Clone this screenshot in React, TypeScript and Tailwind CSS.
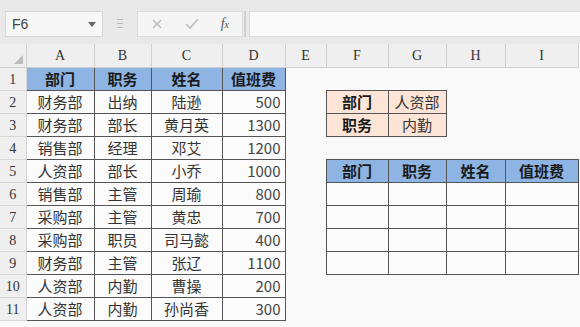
import React from 'react';

type Kind = 'blue' | 'peach' | 'data' | 'none';
type Cell = { t?: string; k?: Kind; b?: boolean; num?: boolean };

const widths = [26, 68, 57, 71, 63, 41, 62, 58, 59, 73];
const letters = ['A', 'B', 'C', 'D', 'E', 'F', 'G', 'H', 'I'];

const staff: [string, string, string, string][] = [
  ['财务部', '出纳', '陆逊', '500'],
  ['财务部', '部长', '黄月英', '1300'],
  ['销售部', '经理', '邓艾', '1200'],
  ['人资部', '部长', '小乔', '1000'],
  ['销售部', '主管', '周瑜', '800'],
  ['采购部', '主管', '黄忠', '700'],
  ['采购部', '职员', '司马懿', '400'],
  ['财务部', '主管', '张辽', '1100'],
  ['人资部', '内勤', '曹操', '200'],
  ['人资部', '内勤', '孙尚香', '300'],
];

const heads = ['部门', '职务', '姓名', '值班费'];

// build the 11 sheet rows, columns A..I
function buildRows(): Cell[][] {
  const rows: Cell[][] = [];
  for (let r = 1; r <= 11; r++) {
    const row: Cell[] = [];
    if (r === 1) heads.forEach((h) => row.push({ t: h, k: 'blue', b: true }));
    else {
      const s = staff[r - 2];
      row.push({ t: s[0], k: 'data' }, { t: s[1], k: 'data' }, { t: s[2], k: 'data' }, { t: s[3], k: 'data', num: true });
    }
    row.push({}); // E
    if (r === 2) row.push({ t: '部门', k: 'peach', b: true }, { t: '人资部', k: 'peach' }, {}, {});
    else if (r === 3) row.push({ t: '职务', k: 'peach', b: true }, { t: '内勤', k: 'peach' }, {}, {});
    else if (r === 5) heads.forEach((h) => row.push({ t: h, k: 'blue', b: true }));
    else if (r >= 6 && r <= 9) for (let i = 0; i < 4; i++) row.push({ k: 'data' });
    else row.push({}, {}, {}, {});
    rows.push(row);
  }
  return rows;
}

const kindClass: Record<Kind, string> = {
  blue: 'border border-[#555] bg-[#8db4e2] text-center',
  peach: 'border border-[#555] bg-[#fce4d6] text-center',
  data: 'border border-[#555] bg-[#fbfbfb] text-center',
  none: '',
};

export default function App() {
  const rows = buildRows();
  return (
    <div className="w-[580px] h-[327px] overflow-hidden bg-[#f9f9f9] text-[#333]" style={{ fontFamily: '"Noto Sans CJK SC", "Liberation Sans", sans-serif' }}>
      {/* formula bar */}
      <div className="h-[44px] bg-[#e9e9e9] flex items-start pt-[11px] pl-[5px]">
        <div className="w-[98px] h-[26px] bg-[#f7f7f7] border border-[#d6d6d6] flex items-center justify-between pl-[6px] pr-[6px] text-[14px] text-[#444]" style={{ fontFamily: '"Liberation Sans", sans-serif' }}>
          <span>F6</span>
          <svg width="8" height="5" viewBox="0 0 8 5"><path d="M0 0h8L4 5z" fill="#666" /></svg>
        </div>
        <div className="w-[34px] h-[26px] flex items-center justify-center">
          <svg width="6" height="14" viewBox="0 0 6 14">
            <rect x="0" y="2" width="6" height="1" fill="#b8b8b8" />
            <rect x="0" y="6" width="6" height="1" fill="#b8b8b8" />
            <rect x="0" y="10" width="6" height="1" fill="#b8b8b8" />
          </svg>
        </div>
        <div className="w-[106px] h-[26px] bg-[#f5f5f5] border border-[#dcdcdc] flex items-center justify-around px-[2px]">
          <svg width="12" height="12" viewBox="0 0 12 12"><path d="M2 2l8 8M10 2l-8 8" stroke="#bdbdbd" strokeWidth="1.6" /></svg>
          <svg width="14" height="12" viewBox="0 0 14 12"><path d="M1 6l4 4 8-9" stroke="#bdbdbd" strokeWidth="1.6" fill="none" /></svg>
          <span className="text-[14px] italic text-[#555] leading-none" style={{ fontFamily: '"Liberation Serif", serif' }}>
            f<span className="text-[10px]">x</span>
          </span>
        </div>
        <div className="w-[2px] h-[26px] bg-[#d0d0d0] ml-[1px]" />
        <div className="flex-1 h-[26px] ml-[3px] bg-[#fafafa] border border-[#dcdcdc] border-r-0" />
      </div>

      {/* sheet */}
      <table className="table-fixed border-collapse w-[578px]">
        <colgroup>
          {widths.map((w, i) => (
            <col key={i} style={{ width: w }} />
          ))}
        </colgroup>
        <thead>
          <tr className="h-[23px]">
            <th className="bg-[#efefef] border-r border-b border-[#cfcfcf] relative p-0">
              <svg className="absolute right-[3px] bottom-[3px]" width="9" height="9" viewBox="0 0 9 9"><path d="M9 0v9H0z" fill="#bdbdbd" /></svg>
            </th>
            {letters.map((l) => (
              <th key={l} className="bg-[#efefef] border-r border-b border-[#cfcfcf] font-normal text-[14px] text-[#333] p-0" style={{ fontFamily: '"Liberation Serif", serif' }}>
                {l}
              </th>
            ))}
          </tr>
        </thead>
        <tbody>
          {rows.map((row, ri) => (
            <tr key={ri} className="h-[23px]">
              <td className="bg-[#efefef] border-r border-b border-[#d6d6d6] text-center text-[14px] text-[#333] p-0 pt-[2px] leading-none" style={{ fontFamily: '"Liberation Serif", serif' }}>
                {ri + 1}
              </td>
              {row.map((c, ci) => (
                <td
                  key={ci}
                  className={`p-0 text-[15px] leading-[20px] whitespace-nowrap ${kindClass[c.k ?? 'none']} ${c.b ? 'font-bold text-[#1a1a1a]' : ''} ${c.num ? 'text-right pr-[4px] text-[#444]' : ''}`}
                >
                  {c.t}
                </td>
              ))}
            </tr>
          ))}
        </tbody>
      </table>
    </div>
  );
}
